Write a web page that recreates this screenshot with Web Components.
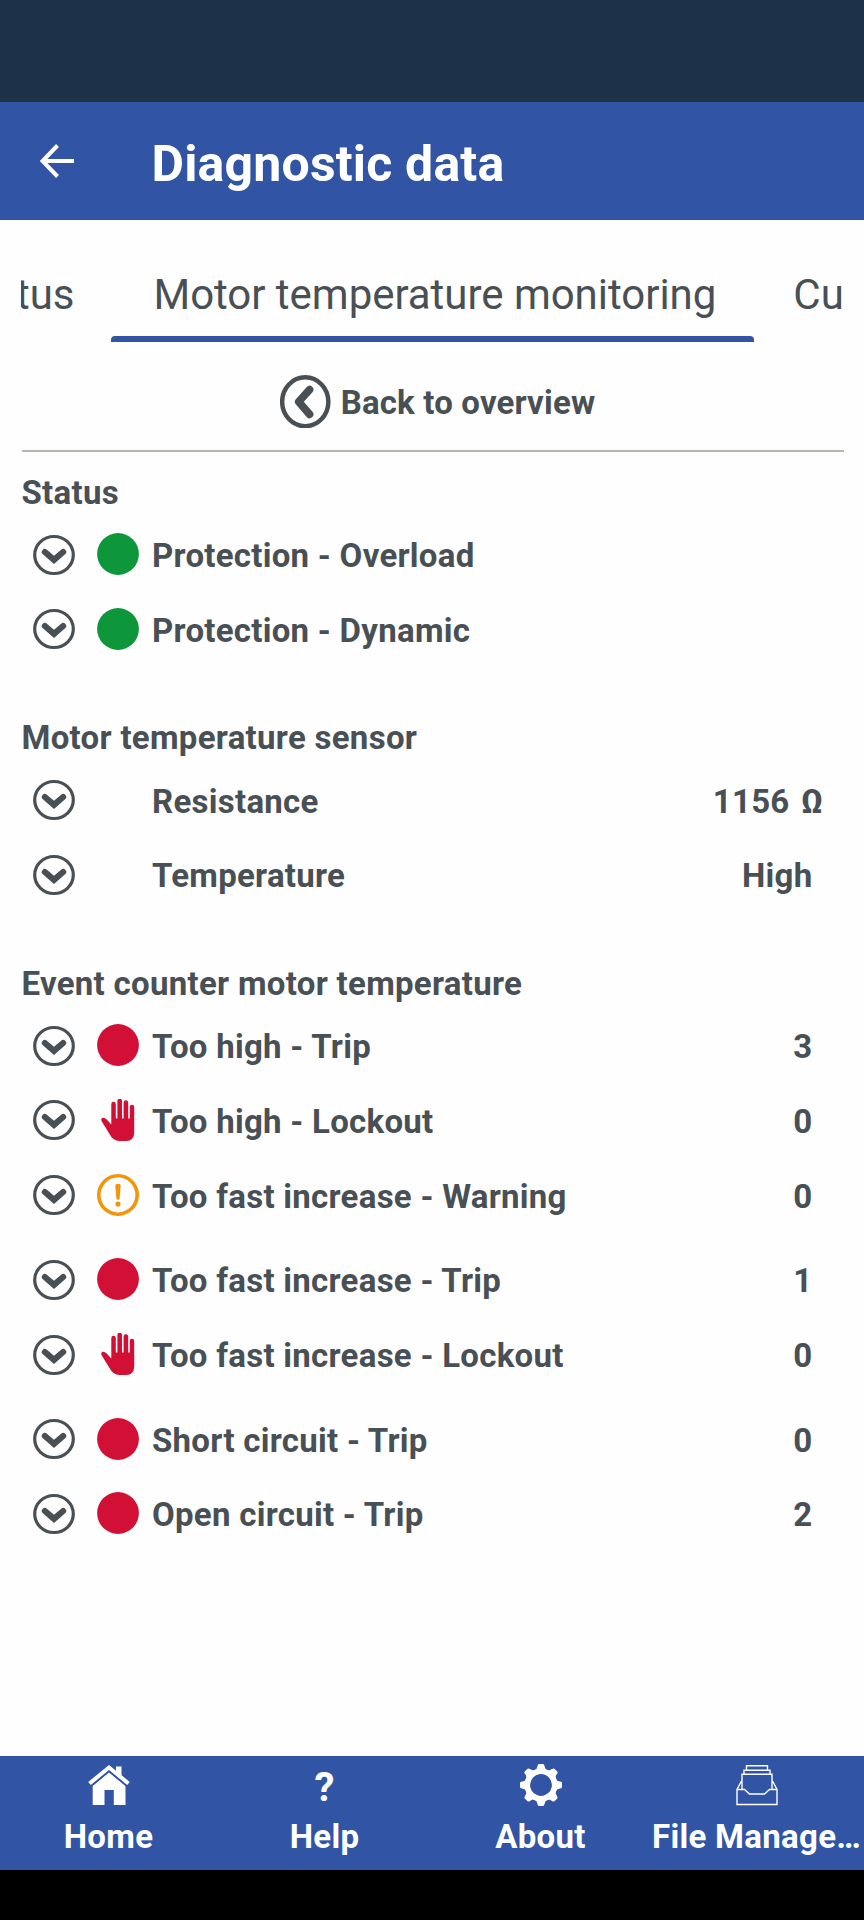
<!DOCTYPE html>
<html lang="en">
<head>
<meta charset="utf-8">
<title>Diagnostic data</title>
<style>
html, body { margin: 0; height: 100%; background: #fefefe; }
body { font-family: Roboto, "Liberation Sans", sans-serif; color: #495055; overflow: hidden; }
</style>
</head>
<body>
<diag-app></diag-app>
<script>
const define = (name, html, setup) => customElements.define(name, class extends HTMLElement {
  constructor() {
    super();
    const t = document.createElement('template');
    t.innerHTML = html;
    this.attachShadow({ mode: 'open' }).append(t.content.cloneNode(true));
  }
  connectedCallback() { if (setup) setup(this, this.shadowRoot); }
});

const TOOTH = 'M14.500 6.500Q17 5.500 17.500 2Q17.800 0 19 0H23Q24.200 0 24.500 2Q25 5.500 27.500 6.500L26 10H16Z';
const ICONS = {
  back: ['0 0 34 34', '<path d="M34 17H3M17.500 1.500L2.500 17l15 15.500" fill="none" stroke="#fff" stroke-width="4"/>'],
  prev: ['0 0 50 53', '<ellipse cx="25" cy="26.500" rx="22.900" ry="24.300" fill="none" stroke="currentColor" stroke-width="4.400"/><path d="M29.300 14.500L18.500 26.500L29.300 39" fill="none" stroke="currentColor" stroke-width="7.600" stroke-linecap="round" stroke-linejoin="round"/>'],
  down: ['0 0 42 42', '<ellipse cx="21" cy="21" rx="19.300" ry="18.500" fill="none" stroke="currentColor" stroke-width="3.200"/><path d="M11.900 18L21 25.800L30.100 18" fill="none" stroke="currentColor" stroke-width="6.200" stroke-linecap="round" stroke-linejoin="miter"/>'],
  green: ['0 0 42 42', '<circle cx="21" cy="21" r="20.900" fill="#0d973a"/>'],
  red: ['0 0 42 42', '<circle cx="21" cy="21" r="20.900" fill="#d20f35"/>'],
  hand: ['0 0 42 42', '<path fill="#d20f35" d="M14.300 5a2.200 2.200 0 0 1 4.500 0V19.500h1.600V2a2.200 2.200 0 0 1 4.600 0V19.500h1.600V3.500a2.200 2.200 0 0 1 4.600 0V19.500h1.600V8a2.100 2.100 0 0 1 4.400 0V33.500Q37.200 42 29 42H22.500Q16 42 12.500 35L4.500 22Q3.500 19.400 5.700 18.700Q7.700 18.300 9.500 20.200L14.300 25.500Z"/>'],
  warn: ['0 0 42 42', '<circle cx="21" cy="21" r="19.200" fill="none" stroke="#f0960a" stroke-width="3.600"/><path d="M18.300 12Q18.300 9.800 21 9.800Q23.700 9.800 23.700 12L22.600 24.500Q22.400 25.800 21 25.800Q19.600 25.800 19.400 24.500Z" fill="#f0960a"/><circle cx="21" cy="30" r="2.600" fill="#f0960a"/>'],
  none: ['0 0 42 42', ''],
  home: ['0 0 42 42', '<g fill="#fff"><path d="M21 8L37.500 21.500V41H25.800V26H16.500V41H4.700V21.500Z"/><path d="M1.500 19.500L21 3.500L40.500 19.500" fill="none" stroke="#fff" stroke-width="4"/><path d="M28 2.500H33.500V14L28 9.500Z"/></g><path d="M3.500 22L21 7.500L38.500 22" fill="none" stroke="#3154a4" stroke-width="1.500"/>'],
  gear: ['0 0 42 42', '<g fill="#fff"><path fill-rule="evenodd" d="M21 4.500a16.500 16.500 0 1 0 0 33a16.500 16.500 0 1 0 0-33ZM21 10.300a10.700 10.700 0 1 1 0 21.400a10.700 10.700 0 1 1 0-21.400Z"/>' + [0, 45, 90, 135, 180, 225, 270, 315].map(a => `<path transform="rotate(${a} 21 21)" d="${TOOTH}"/>`).join('') + '</g><circle cx="21" cy="21" r="10.700" fill="#3154a4"/>'],
  files: ['0 0 42 42', '<g fill="none" stroke="#fff" stroke-width="1.400"><path d="M10.500 6V1.800H31.500V6M8 10V6.200H34V10M6 25.500V10.300H36V25.500M5.500 17L1 25.500V40.500H41V25.500L36.500 17M1 25.500H8.500L13.500 30H28.500L33.500 25.500H41"/></g>']
};

define('ui-icon', `<style>:host{display:block;flex:none}svg{display:block;width:100%;height:100%}</style><svg></svg>`, (el, root) => {
  const [box, body] = ICONS[el.getAttribute('name') || 'none'];
  const svg = root.querySelector('svg');
  svg.setAttribute('viewBox', box);
  svg.innerHTML = body;
});

define('app-header', `<style>
:host{display:flex;align-items:center;height:118px;background:#3154a4;color:#fff;box-sizing:border-box;padding-left:40px}
ui-icon{width:34px;height:34px;margin-top:-1px}
h1{margin:6px 0 0 77.500px;font-size:50px;line-height:60px;font-weight:700;letter-spacing:.18px;white-space:nowrap}
</style><ui-icon name="back"></ui-icon><h1><slot></slot></h1>`);

define('tab-item', `<style>
:host{display:grid;grid-template-rows:1fr 6.300px;flex:none;box-sizing:border-box;font-size:42px;line-height:150px;white-space:nowrap}
span{height:116px}
:host([active]) span{padding-left:42.500px;letter-spacing:-.03px}
:host([active]){width:643.300px}
:host([active])::after{content:"";background:#3154a4;border-radius:4px 4px 0 0}
:host([side=start]){width:90px;padding-right:36.500px;justify-content:end}
:host([side=end]){width:90px;padding-left:39px}
</style><span><slot></slot></span>`);

define('tab-strip', `<style>
:host{display:flex;overflow:hidden;margin:0 20px 0 21px;height:122.300px}
</style><slot></slot>`);

define('back-link', `<style>
:host{display:flex;align-items:center;justify-content:center;height:96.500px;padding:11px 0 0 9.500px;margin:0 20px 0 22px;border-bottom:2.500px solid #b6b9b0;font-size:33px;font-weight:700;letter-spacing:.17px}
ui-icon{width:50.500px;height:53.500px;margin-right:10px}
span{margin-top:2px;white-space:nowrap}
</style><ui-icon name="prev"></ui-icon><span><slot></slot></span>`);

define('data-section', `<style>
:host{display:block;margin-bottom:31.200px}
h2{margin:0;padding-left:21.500px;height:65px;line-height:81px;font-size:33px;font-weight:700;letter-spacing:.29px;white-space:nowrap}
</style><h2></h2><slot></slot>`, (el, root) => root.querySelector('h2').textContent = el.getAttribute('heading'));

define('data-row', `<style>
:host{display:flex;align-items:center;height:74.700px;padding:0 51.500px 0 32.500px;font-size:33px;font-weight:700;letter-spacing:.27px;white-space:nowrap}
:host([gap]){margin-top:10px}
ui-icon{width:42px;height:42px;margin-top:1px}
.s{margin-left:22.500px;margin-top:0}
.l{flex:1;margin:3px 0 0 13px}
.v{margin-top:3px}
.unit{margin-right:-11px;word-spacing:3px}
</style><ui-icon name="down"></ui-icon><ui-icon class="s"></ui-icon><span class="l"><slot></slot></span><span class="v"></span>`, (el, root) => {
  const s = document.createElement('ui-icon');
  s.className = 's';
  s.setAttribute('name', el.getAttribute('icon') || 'none');
  root.querySelector('.s').replaceWith(s);
  const v = root.querySelector('.v');
  v.textContent = el.getAttribute('value') || '';
  if (el.hasAttribute('unit')) v.classList.add('unit');
});

define('nav-item', `<style>
:host{display:flex;flex-direction:column;align-items:center;min-width:0;padding:8px 0 0 1px;color:#fff;font-weight:700}
ui-icon,.g{width:42px;height:42px}
.g{font-size:40px;line-height:48px;text-align:center}
span{white-space:nowrap;font-size:33px;line-height:40px;margin-top:11px;letter-spacing:.3px}
</style><slot name="icon"></slot><span><slot></slot></span>`, (el, root) => {
  const n = el.getAttribute('icon');
  const d = document.createElement(n === 'help' ? 'div' : 'ui-icon');
  if (n === 'help') { d.className = 'g'; d.textContent = '?'; } else d.setAttribute('name', n);
  root.querySelector('slot[name]').replaceWith(d);
});

define('bottom-nav', `<style>
:host{display:grid;grid-template-columns:repeat(4,1fr);height:113.500px;background:#3154a4;flex:none}
</style><slot></slot>`);

define('diag-app', `<style>
:host{display:flex;flex-direction:column;width:864px;height:1920px;background:#fefefe;overflow:hidden}
.status{height:102px;background:#1d3148;flex:none}
app-header,tab-strip,back-link{flex:none}
main{flex:1;min-height:0}
.system{height:50.500px;background:#000;flex:none}
</style>
<div class="status"></div>
<app-header>Diagnostic data</app-header>
<tab-strip><tab-item side="start">tus</tab-item><tab-item active>Motor temperature monitoring</tab-item><tab-item side="end">Cu</tab-item></tab-strip>
<back-link>Back to overview</back-link>
<main>
<data-section heading="Status">
<data-row icon="green">Protection - Overload</data-row>
<data-row icon="green">Protection - Dynamic</data-row>
</data-section>
<data-section heading="Motor temperature sensor">
<data-row value="1156 Ω" unit>Resistance</data-row>
<data-row value="High">Temperature</data-row>
</data-section>
<data-section heading="Event counter motor temperature">
<data-row icon="red" value="3">Too high - Trip</data-row>
<data-row icon="hand" value="0">Too high - Lockout</data-row>
<data-row icon="warn" value="0">Too fast increase - Warning</data-row>
<data-row gap icon="red" value="1">Too fast increase - Trip</data-row>
<data-row icon="hand" value="0">Too fast increase - Lockout</data-row>
<data-row gap icon="red" value="0">Short circuit - Trip</data-row>
<data-row icon="red" value="2">Open circuit - Trip</data-row>
</data-section>
</main>
<bottom-nav><nav-item icon="home">Home</nav-item><nav-item icon="help">Help</nav-item><nav-item icon="gear">About</nav-item><nav-item icon="files">File Manage…</nav-item></bottom-nav>
<div class="system"></div>`);
</script>
</body>
</html>
